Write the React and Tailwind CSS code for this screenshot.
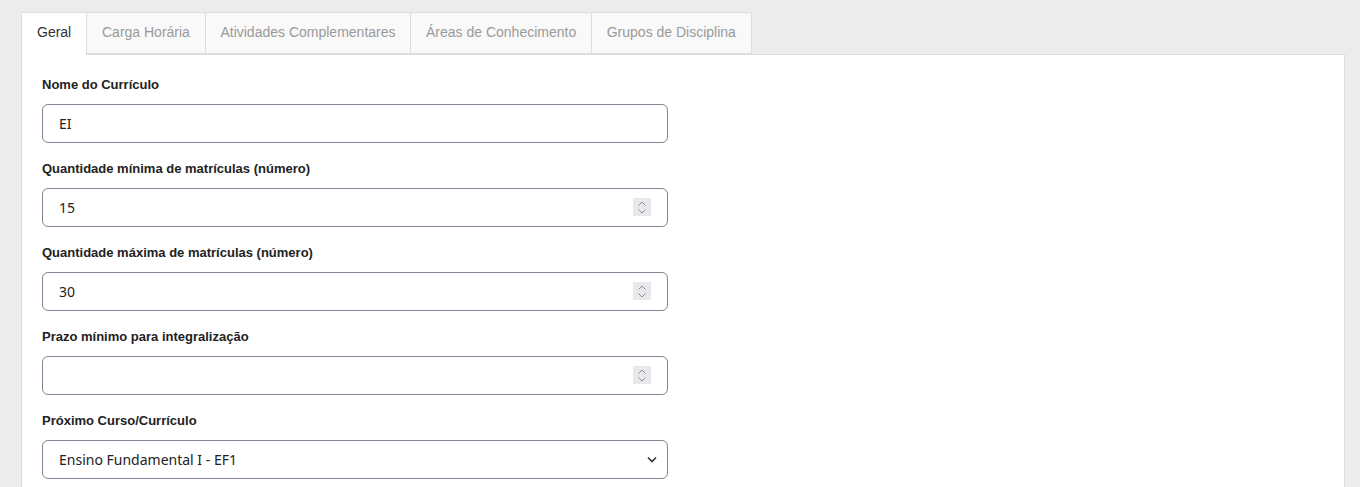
import React from "react";

const tabs = ["Geral", "Carga Horária", "Atividades Complementares", "Áreas de Conhecimento", "Grupos de Disciplina"];

const Spinner = () => (
    <div className="flex h-[18px] w-[18px] flex-col items-center justify-center gap-[3px] bg-[#e9e9ed]">
        <svg width="8" height="5" viewBox="0 0 8 5" fill="none" stroke="#8d8d92" strokeWidth="1">
            <path d="M0.5 4.5L4 1L7.5 4.5" />
        </svg>
        <svg width="8" height="5" viewBox="0 0 8 5" fill="none" stroke="#8d8d92" strokeWidth="1">
            <path d="M0.5 0.5L4 4L7.5 0.5" />
        </svg>
    </div>
);

const Field = ({ label, value, kind }) => (
    <div className="flex flex-col">
        <label className="h-5 text-[13px] leading-5 font-bold text-[#222]">{label}</label>
        <div className="mt-[8.5px] mb-[16px] flex h-[39.5px] w-[626px] items-center justify-between rounded-[6px] border border-[#7d8894] bg-white pl-4 pr-4 text-[14px] text-[#222]" style={{ fontFamily: '"Noto Sans", sans-serif' }}>
            <span>{value}</span>
            {kind === "number" && <Spinner />}
            {kind === "select" && (
                <svg width="10" height="7" viewBox="0 0 10 7" fill="none" stroke="#333" strokeWidth="1.6" className="-mr-[6px]">
                    <path d="M1 1.5L5 5.5L9 1.5" />
                </svg>
            )}
        </div>
    </div>
);

export default function App() {
    return (
        <div className="min-h-screen bg-[#ececec] pt-[12px] pl-[21px] pr-[15px]" style={{ fontFamily: '"Liberation Sans", Arial, sans-serif' }}>
            <div className="relative z-10 -mb-px flex">
                {tabs.map((t, i) => (
                    <div
                        key={t}
                        className={
                            i === 0
                                ? "flex h-[43px] items-center border border-b-0 border-[#dddddd] bg-white px-[15px] pb-[3px] text-[14px] text-[#333]"
                                : "flex h-[42px] items-center border border-l-0 border-[#dddddd] bg-[#f9f9f9] px-[14.75px] pb-[2px] text-[14px] text-[#999]"
                        }
                    >
                        {t}
                    </div>
                ))}
            </div>
            <div className="min-h-[480px] border border-[#dddddd] bg-white px-5 pt-5">
                <Field label="Nome do Currículo" value="EI" />
                <Field label="Quantidade mínima de matrículas (número)" value="15" kind="number" />
                <Field label="Quantidade máxima de matrículas (número)" value="30" kind="number" />
                <Field label="Prazo mínimo para integralização" value="" kind="number" />
                <Field label="Próximo Curso/Currículo" value="Ensino Fundamental I - EF1" kind="select" />
            </div>
        </div>
    );
}
